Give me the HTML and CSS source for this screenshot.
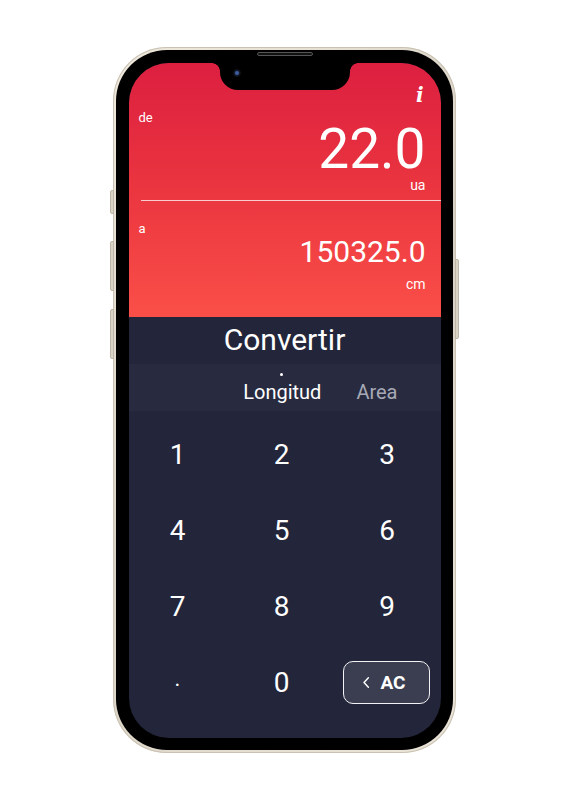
FILE: index.html
```html
<!DOCTYPE html>
<html lang="es">
<head>
<meta charset="utf-8">
<title>Convertir</title>
<link rel="stylesheet" href="styles.css">
</head>
<body>
<div class="stage">
  <div class="phone">
    <span class="btn btn-silent"></span>
    <span class="btn btn-vol-up"></span>
    <span class="btn btn-vol-down"></span>
    <span class="btn btn-power"></span>
    <span class="speaker"></span>
    <div class="bezel">
      <div class="screen">
        <div class="notch"><span class="camera"></span></div>
        <header class="display">
          <div class="top-row"><span class="info">i</span></div>
          <div class="field from">
            <span class="label">de</span>
            <span class="value big">22.0</span>
            <span class="unit">ua</span>
          </div>
          <div class="divider"></div>
          <div class="field to">
            <span class="label">a</span>
            <span class="value mid">150325.0</span>
            <span class="unit">cm</span>
          </div>
        </header>
        <main class="pad">
          <h1 class="title">Convertir</h1>
          <nav class="tabs">
            <span class="tab active">Longitud</span>
            <span class="tab">Area</span>
          </nav>
          <div class="keys">
            <span class="key">1</span><span class="key">2</span><span class="key">3</span>
            <span class="key">4</span><span class="key">5</span><span class="key">6</span>
            <span class="key">7</span><span class="key">8</span><span class="key">9</span>
            <span class="key dot">.</span><span class="key">0</span>
            <span class="key ac"><span class="ac-btn"><svg class="chev" viewBox="0 0 10 16" width="8" height="13"><path d="M8 2 L2.5 8 L8 14" fill="none" stroke="#fff" stroke-width="1.8" stroke-linecap="round" stroke-linejoin="round"/></svg>AC</span></span>
          </div>
        </main>
      </div>
    </div>
  </div>
</div>
</body>
</html>
```
FILE: styles.css
```css
* { box-sizing: border-box; margin: 0; padding: 0; }
html, body { background: #fff; }
body { font-family: Roboto, "Noto Sans", sans-serif; color: #fff; }
.stage { display: flex; justify-content: center; padding-top: 47px; }
.phone {
  position: relative;
  width: 343px; height: 706px;
  border-radius: 54px;
  padding: 3px;
  background: linear-gradient(135deg, #efe9de, #d8d1c3 50%, #ece6da);
  box-shadow: inset 0 0 0 1px #c9c2b4;
}
.btn { position: absolute; width: 4px; background: #d9d3c6; border: 1px solid #bdb6a8; }
.btn-silent { left: -3px; top: 143px; height: 24px; border-radius: 2px 0 0 2px; }
.btn-vol-up { left: -3px; top: 194px; height: 50px; border-radius: 2px 0 0 2px; }
.btn-vol-down { left: -3px; top: 262px; height: 50px; border-radius: 2px 0 0 2px; }
.btn-power { right: -3px; top: 212px; height: 80px; border-radius: 0 2px 2px 0; }
.speaker {
  position: absolute; left: 144px; top: 5px; width: 56px; height: 4px;
  background: #111; border-radius: 3px; border: 1px solid #555; z-index: 3;
}
.bezel {
  width: 100%; height: 100%;
  background: #000;
  border-radius: 51px;
  padding: 13px 12px 12px 13px;
}
.screen {
  position: relative;
  width: 100%; height: 100%;
  border-radius: 40px;
  overflow: hidden;
  background: #23263a;
  display: flex; flex-direction: column;
}
.notch {
  position: absolute; left: 50%; top: 0; transform: translateX(-50%);
  width: 130px; height: 27px; background: #000;
  border-radius: 0 0 18px 18px;
}
.notch::before, .notch::after {
  content: ""; position: absolute; top: 0; width: 8px; height: 8px;
}
.notch::before { left: -8px; background: radial-gradient(circle at 0 100%, transparent 7.5px, #000 8px); }
.notch::after { right: -8px; background: radial-gradient(circle at 100% 100%, transparent 7.5px, #000 8px); }
.camera {
  position: absolute; left: 13px; top: 6px; width: 8px; height: 8px; border-radius: 50%;
  background: radial-gradient(circle at 50% 50%, #3d5a9a 0 1.5px, #111a2c 2.5px, #0a0a0a 4px);
}
.display {
  height: 254px;
  background: linear-gradient(180deg, #dc1f40 0%, #e9333f 45%, #fa4f48 100%);
  display: flex; flex-direction: column;
  padding: 0 15px 0 10px;
}
.top-row { height: 42px; display: flex; justify-content: flex-end; align-items: flex-end; }
.info {
  font-family: "DejaVu Serif", "Liberation Serif", serif;
  font-style: italic; font-weight: bold; font-size: 20px; line-height: 20px;
  padding-right: 2px;
}
.field { display: flex; flex-direction: column; }
.label { font-size: 13px; line-height: 16px; }
.value { align-self: flex-end; font-weight: 400; }
.unit { align-self: flex-end; font-size: 14px; line-height: 16px; }
.from .label { margin-top: 5px; }
.big { font-size: 55px; line-height: 46px; margin-top: 0; }
.from .unit { margin-top: 5px; }
.divider { height: 1px; background: rgba(255,255,255,0.75); margin: 7px -15px 0 2px; }
.to .label { margin-top: 20px; }
.mid { font-size: 30px; line-height: 34px; margin-top: -2px; }
.to .unit { margin-top: 7px; }

.pad { flex: 1; display: flex; flex-direction: column; }
.title { font-size: 30px; font-weight: 400; text-align: center; line-height: 46px; }
.tabs {
  height: 47px; background: #282b40;
  display: flex; justify-content: flex-end; align-items: center; gap: 35px;
  padding-right: 43px; padding-top: 8px;
  margin-top: 1px;
}
.tab { font-size: 20px; color: #a7a9b5; position: relative; }
.tab.active { color: #fff; }
.tab.active::before {
  content: ""; position: absolute; left: 50%; top: -7px; width: 3px; height: 3px;
  margin-left: -2px; background: #fff; border-radius: 50%;
}
.keys {
  display: grid; grid-template-columns: 104px 104px 1fr;
  grid-auto-rows: 76px;
  padding-top: 5px;
  margin-left: -3px;
}
.key {
  display: flex; justify-content: center; align-items: center;
  font-size: 28px; font-weight: 400;
}
.key.dot { font-size: 22px; padding-bottom: 8px; }
.ac { justify-content: flex-start; padding-left: 9px; }
.ac-btn {
  width: 87px; height: 43px;
  border: 1.5px solid #f2f2f4; border-radius: 10px;
  background: #3b3e51;
  display: flex; align-items: center; justify-content: center; gap: 10px;
  font-size: 19px; font-weight: 700; padding-right: 4px;
}
.chev { display: block; }
```
